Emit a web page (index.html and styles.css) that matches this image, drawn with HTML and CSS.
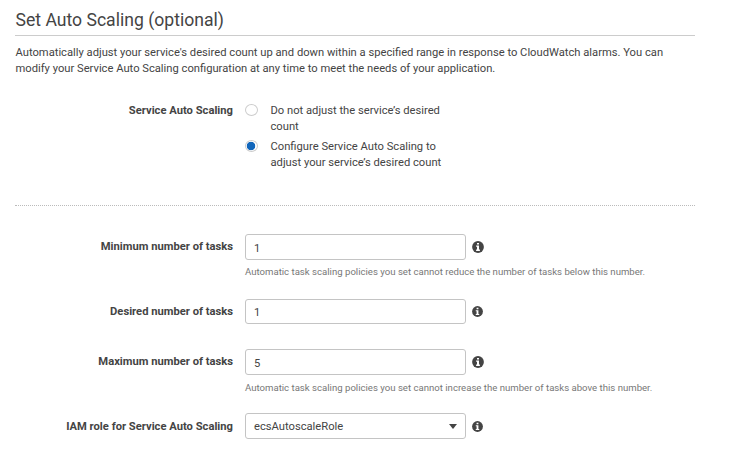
FILE: index.html
```html
<!DOCTYPE html>
<html lang="en"><head><meta charset="utf-8"><title>Set Auto Scaling</title><link rel="stylesheet" href="styles.css"></head>
<body>
<svg class="defs" aria-hidden="true"><symbol id="info" viewBox="0 0 12 12"><circle cx="6" cy="6" r="5.9" fill="#444"/><path d="M5 2h2v1.6H5zM4.1 4.6H7V8.6h.9v1.3H4.1V8.6H5V5.8h-.9z" fill="#fff"/></symbol></svg>
<main>
<h1>Set Auto Scaling (optional)</h1>
<p class="intro">Automatically adjust your service's desired count up and down within a specified range in response to CloudWatch alarms. You can<br>modify your Service Auto Scaling configuration at any time to meet the needs of your application.</p>
<section class="row choice"><div class="label">Service Auto Scaling</div><div class="options">
<div class="option"><span class="radio"></span><span>Do not adjust the service’s desired<br>count</span></div>
<div class="option"><span class="radio on"></span><span>Configure Service Auto Scaling to<br>adjust your service’s desired count</span></div></div></section>
<section class="fields">
<div class="row min"><div class="label">Minimum number of tasks</div><div><div class="control"><div class="box">1</div><svg class="info"><use href="#info"/></svg></div><div class="hint">Automatic task scaling policies you set cannot reduce the number of tasks below this number.</div></div></div>
<div class="row des"><div class="label">Desired number of tasks</div><div class="control"><div class="box short">1</div><svg class="info small"><use href="#info"/></svg></div></div>
<div class="row max"><div class="label">Maximum number of tasks</div><div><div class="control"><div class="box">5</div><svg class="info"><use href="#info"/></svg></div><div class="hint">Automatic task scaling policies you set cannot increase the number of tasks above this number.</div></div></div>
<div class="row role"><div class="label">IAM role for Service Auto Scaling</div><div class="control"><div class="box select">ecsAutoscaleRole<span class="caret"></span></div><svg class="info small"><use href="#info"/></svg></div></div>
</section></main></body></html>
```

FILE: styles.css
```css
*{box-sizing:border-box}
body{margin:0;background:#fff;color:#444;font:11.19px/16px Roboto,sans-serif}
.defs{position:absolute;width:0;height:0}
main{width:680px;margin-left:15px}
h1{margin:0;height:36px;padding:8px 0 0 .5px;border-bottom:1px solid #ccc;font-size:17.6px;line-height:24px;font-weight:400}
.intro{margin:0;padding:9px 0 0 .5px;white-space:nowrap}
.row{display:grid;grid-template-columns:218px 1fr;column-gap:12px;align-items:start}
.label{text-align:right;font-weight:700;line-height:16px;white-space:nowrap}
.choice{margin-top:26px;height:103px;border-bottom:1px dotted #bbb}
.option{display:flex;gap:12.5px;margin-bottom:4px;white-space:nowrap}
.radio{width:13px;height:12px;margin-top:1px;border:1px solid #ccc;border-radius:50%}
.radio.on{background:radial-gradient(circle at 5px 5px,#1166bb 0 3.9px,#fff 4.6px)}
.fields{padding-top:28px}
.fields .label{padding-top:5px}
.fields .role .label{padding-top:6px}
.control{display:flex;align-items:center;gap:6px}
.box{width:221px;height:26px;border:1px solid #c4c4c4;border-radius:3px;padding:6px 8px 2px;line-height:16px}
.box.short{height:25px;padding-top:5px}
.info{width:12px;height:12px;margin-left:-.4px}
.info.small{width:11px;height:11px;margin-left:-.5px}
.hint{font-size:9.6px;line-height:14px;margin-top:5px;color:#777;white-space:nowrap}
.min{height:65px}
.des{height:50px}
.max{height:64px}
.max .hint{margin-top:6px}
.box.select{display:flex;justify-content:space-between;align-items:center;padding:1px 8px 0}
.caret{border:4px solid transparent;border-top:5px solid #444;border-bottom:0;margin-top:-1px}
```
